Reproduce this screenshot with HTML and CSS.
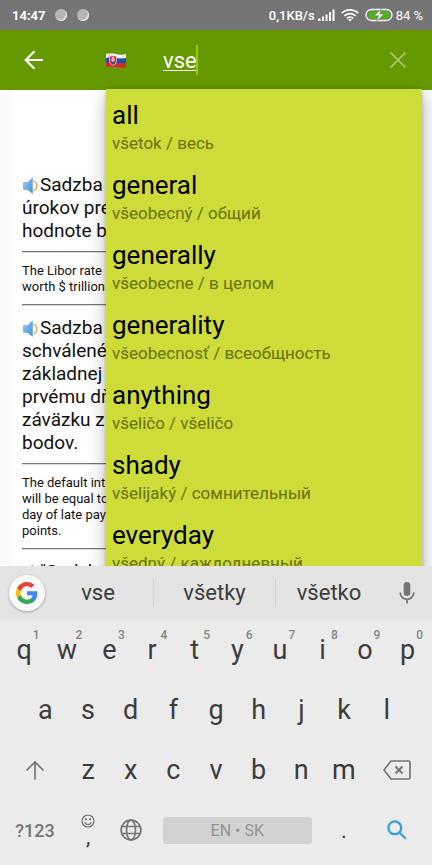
FILE: index.html
```html
<!DOCTYPE html>
<html lang="sk">
<head>
<meta charset="utf-8">
<meta name="viewport" content="width=device-width, initial-scale=1">
<title>Slovník</title>
<link rel="stylesheet" href="styles.css">
</head>
<body>
<div class="status">
  <span class="clock">14:47</span>
  <span class="dot"></span>
  <span class="dot"></span>
  <span class="speed">0,1KB/s</span>
  <svg class="signal" width="18" height="14" viewBox="0 0 18 14" fill="#fff"><path d="M1 13V10.500H3.500V13zM5 13V8.500H7V13zM8.500 13V6.500H10.500V13zM12 13V4H14V13zM15.500 13V1.500H17.500V13z"/></svg>
  <svg class="wifi" width="18" height="14" viewBox="0 0 18 14" fill="none" stroke="#fff" stroke-width="1.700"><path d="M.8 5.200a11.600 11.600 0 0 1 16.400 0M3.400 7.900a7.900 7.900 0 0 1 11.200 0M5.900 10.400a4.400 4.400 0 0 1 6.200 0"/><path d="M9 13.500L7.200 11.600a2.600 2.600 0 0 1 3.600 0z" fill="#fff" stroke="none"/></svg>
  <svg class="battery" width="28" height="14" viewBox="0 0 28 14"><rect x="1" y="1.500" width="26" height="11" rx="5.500" fill="none" stroke="#fff" stroke-width="1.300"/><path d="M7 3.200h14a3.800 3.800 0 0 1 0 7.600H7a3.800 3.800 0 0 1 0-7.600z" fill="#4fb31f"/><path d="M16.200 1L9.500 7.800h4L11.800 13l7-7h-4.200z" fill="#fff" stroke="#757575" stroke-width=".6"/></svg>
  <span class="percent">84 %</span>
</div>

<header class="appbar">
  <button class="back" aria-label="Späť"><svg width="20" height="20" viewBox="0 0 20 20" fill="none" stroke="#fff" stroke-width="2.200"><path d="M19 10H2M10.500 1.200L1.700 10l8.800 8.800"/></svg></button>
  <svg class="flag" width="20" height="15" viewBox="0 0 20 15"><path d="M0 1Q5-.5 10 1T20 1V5.500H0z" fill="#eee"/><path d="M0 5Q5 3.500 10 5T20 5V10H0z" fill="#1750ad"/><path d="M0 9.500Q5 8.500 10 9.500T20 9.500V14Q15 15 10 14T0 14z" fill="#d9232e"/><path d="M3.500 3h7v5q0 3-3.500 4.500Q3.500 11 3.500 8z" fill="#d62b3c" stroke="#f2dfe3" stroke-width=".7"/><path d="M7 4v5M5.700 5.300h2.600M5 7h4" stroke="#fff" stroke-width=".8"/><path d="M4.500 9.500q1.200-1.200 2.500 0 1.200-1.200 2.500 0L7 11.500z" fill="#1750ad"/></svg>
  <div class="field">
    <input class="query" type="text" value="vse" aria-label="Hľadať">
    <span class="caret"></span>
  </div>
  <button class="clear" aria-label="Vymazať"><svg width="18" height="18" viewBox="0 0 18 18" stroke="#a2c267" stroke-width="1.900"><path d="M1.500 1.500l15 15M16.500 1.500l-15 15"/></svg></button>
  <ul class="results">
    <li><button class="result"><span class="word">all</span><span class="gloss">všetok / весь</span></button></li>
    <li><button class="result"><span class="word">general</span><span class="gloss">všeobecný / общий</span></button></li>
    <li><button class="result"><span class="word">generally</span><span class="gloss">všeobecne / в целом</span></button></li>
    <li><button class="result"><span class="word">generality</span><span class="gloss">všeobecnosť / всеобщность</span></button></li>
    <li><button class="result"><span class="word">anything</span><span class="gloss">všeličo / všeličo</span></button></li>
    <li><button class="result"><span class="word">shady</span><span class="gloss">všelijaký / сомнительный</span></button></li>
    <li><button class="result"><span class="word">everyday</span><span class="gloss">všedný / каждодневный</span></button></li>
  </ul>
</header>

<svg class="defs" width="0" height="0" aria-hidden="true">
  <defs>
    <linearGradient id="blue" x1="0" y1="0" x2="1" y2="1"><stop offset="0" stop-color="#9cccf2"/><stop offset="1" stop-color="#3f8fd8"/></linearGradient>
    <symbol id="speaker" viewBox="0 0 16 18"><path d="M1.500 5.500h4L10.500 1v15.500L5.500 12.500h-4z" fill="url(#blue)" stroke="#69a5d8" stroke-width=".6"/><path d="M11.500 4.200q3.400 1.300 3.400 4.700t-3.400 5" fill="none" stroke="#e9a25b" stroke-width="1.400"/></symbol>
  </defs>
</svg>

<main class="content">
  <article class="examples">
    <p class="source"><svg class="speaker"><use href="#speaker"/></svg>Sadzba<br>úrokov pre<br>hodnote b</p>
    <hr>
    <p class="translation">The Libor rate<br>worth $ trillion</p>
    <hr>
    <p class="source"><svg class="speaker"><use href="#speaker"/></svg>Sadzba<br>schválené<br>základnej<br>prvému dň<br>záväzku z<br>bodov.</p>
    <hr>
    <p class="translation">The default int<br>will be equal to<br>day of late pay<br>points.</p>
    <hr>
    <p class="source"><svg class="speaker"><use href="#speaker"/></svg>"Sadzba</p>
  </article>
</main>

<section class="keyboard" aria-label="Klávesnica">
  <div class="strip">
    <button class="google" aria-label="Google"><svg width="22" height="22" viewBox="0 0 48 48"><path fill="#4285f4" d="M46.500 24.500c0-1.600-.1-3.100-.4-4.500H24v9h12.700c-.6 3-2.300 5.500-4.800 7.200v6h7.700c4.500-4.200 6.900-10.300 6.900-17.700z"/><path fill="#34a853" d="M24 48c6.500 0 11.900-2.100 15.900-5.800l-7.700-6c-2.200 1.400-4.900 2.300-8.200 2.300-6.300 0-11.600-4.200-13.500-9.900H2.600v6.200C6.500 42.600 14.600 48 24 48z"/><path fill="#fbbc05" d="M10.500 28.600a14.500 14.500 0 0 1 0-9.200v-6.200H2.600a24 24 0 0 0 0 21.600z"/><path fill="#ea4335" d="M24 9.500c3.500 0 6.700 1.200 9.200 3.600l6.900-6.900C35.900 2.400 30.500 0 24 0 14.600 0 6.500 5.400 2.600 13.200l7.900 6.200C12.400 13.700 17.700 9.500 24 9.500z"/></svg></button>
    <button class="suggest">vse</button>
    <button class="suggest divided">všetky</button>
    <button class="suggest">všetko</button>
    <button class="mic" aria-label="Hlasové zadávanie"><svg width="16" height="22" viewBox="0 0 16 22"><rect x="4.700" y="0" width="6.600" height="14" rx="3.300" fill="#757575"/><path d="M1.200 10.500a6.800 6.800 0 0 0 13.600 0M8 17.300V21.500" fill="none" stroke="#757575" stroke-width="1.800"/></svg></button>
  </div>
  <div class="row">
    <button class="key">q<sup>1</sup></button><button class="key">w<sup>2</sup></button><button class="key">e<sup>3</sup></button><button class="key">r<sup>4</sup></button><button class="key">t<sup>5</sup></button><button class="key">y<sup>6</sup></button><button class="key">u<sup>7</sup></button><button class="key">i<sup>8</sup></button><button class="key">o<sup>9</sup></button><button class="key">p<sup>0</sup></button>
  </div>
  <div class="row inset">
    <button class="key">a</button><button class="key">s</button><button class="key">d</button><button class="key">f</button><button class="key">g</button><button class="key">h</button><button class="key">j</button><button class="key">k</button><button class="key">l</button>
  </div>
  <div class="row">
    <button class="key side" aria-label="Shift"><svg width="20" height="20" viewBox="0 0 20 20" fill="none" stroke="#757575" stroke-width="1.700"><path d="M10 19.500V2M1.500 10.500L10 2l8.500 8.500"/></svg></button><button class="key">z</button><button class="key">x</button><button class="key">c</button><button class="key">v</button><button class="key">b</button><button class="key">n</button><button class="key">m</button><button class="key side" aria-label="Backspace"><svg width="28" height="20" viewBox="0 0 28 20" fill="none" stroke="#757575" stroke-width="1.700"><path d="M8 1h17.500a1.500 1.500 0 0 1 1.500 1.500v15a1.500 1.500 0 0 1-1.500 1.500H8L1 10z"/><path d="M12.500 6.500l7 7M19.500 6.500l-7 7" stroke-width="2"/></svg></button>
  </div>
  <div class="row">
    <button class="key side symbols">?123</button>
    <button class="key comma"><svg width="14" height="14" viewBox="0 0 14 14" fill="none" stroke="#666" stroke-width="1.100"><circle cx="7" cy="7" r="6"/><path d="M3.800 8.300a3.400 3.400 0 0 0 6.400 0"/><circle cx="4.900" cy="5.300" r=".5" fill="#666"/><circle cx="9.100" cy="5.300" r=".5" fill="#666"/></svg><span>,</span></button>
    <button class="key" aria-label="Jazyk"><svg width="22" height="22" viewBox="0 0 22 22" fill="none" stroke="#757575" stroke-width="1.700"><circle cx="11" cy="11" r="9.900"/><ellipse cx="11" cy="11" rx="4.500" ry="9.900"/><path d="M2 7.500h18M2 14.500h18"/></svg></button>
    <div class="spacecell"><button class="space">EN • SK</button></div>
    <button class="key period">.</button>
    <button class="key side" aria-label="Hľadať"><svg width="20" height="20" viewBox="0 0 20 20" fill="none" stroke="#3c9fd6" stroke-width="2.300"><circle cx="7.800" cy="7.800" r="6.400"/><path d="M12.500 12.500l6.300 6.300"/></svg></button>
  </div>
</section>
</body>
</html>
```

FILE: styles.css
```css
* { box-sizing: border-box; }

body {
  margin: 0;
  height: 100vh;
  display: flex;
  flex-direction: column;
  overflow: hidden;
  background: #fafafa;
  color: #111;
  font-family: Roboto, "Noto Sans", sans-serif;
}

button, input {
  margin: 0;
  padding: 0;
  border: 0;
  background: none;
  color: inherit;
  font: inherit;
}

svg { display: block; flex: none; }
.defs { position: absolute; }

.status {
  flex: none;
  height: 30px;
  padding: 0 9px 0 12px;
  display: flex;
  align-items: center;
  background: #757575;
  color: #fff;
  font-size: 13px;
}
.clock { font-weight: 700; margin-right: 9px; }
.dot {
  width: 12px;
  height: 12px;
  margin-right: 10px;
  border-radius: 50%;
  background: #b5b5b5;
  box-shadow: inset -1px -1px 1px #eee;
}
.speed { margin-left: auto; font-weight: 500; }
.signal { margin: 0 6px 0 2px; }
.wifi { margin-right: 6px; }
.battery { margin-right: 3px; }

.appbar {
  position: relative;
  z-index: 1;
  flex: none;
  height: 60px;
  padding: 0 25px 0 24px;
  display: flex;
  align-items: center;
  background: #669900;
  color: #fff;
}
.flag { margin: 0 37px 0 62px; }
.field { flex: 1; display: flex; align-items: center; }
.query {
  width: 33px;
  height: 30px;
  outline: 0;
  font-size: 22px;
  text-decoration: underline;
  text-decoration-thickness: 1px;
  text-underline-offset: 2px;
}
.caret { width: 2px; height: 30px; background: #99cc00; }

.results {
  position: absolute;
  top: 59px;
  left: 106px;
  right: 10px;
  margin: 0;
  padding: 0;
  list-style: none;
  background: #cddc39;
  box-shadow: 0 8px 16px rgba(0, 0, 0, .3), 0 0 4px rgba(0, 0, 0, .2);
}
.result {
  display: block;
  width: 100%;
  height: 70px;
  padding: 9px 6px 5px;
  text-align: left;
}
.word, .gloss { display: block; white-space: nowrap; }
.word { font-size: 26px; line-height: 34px; color: #000; }
.gloss { font-size: 17px; line-height: 22px; color: #6a7210; }

.content {
  flex: 1;
  min-height: 0;
  overflow: hidden;
  padding: 0 12px;
}
.examples {
  min-height: 100%;
  padding: 83px 10px 0;
  background: #fff;
}
.examples p { margin: 0; white-space: nowrap; }
.source { font-size: 19px; line-height: 23px; }
.translation { font-size: 13px; line-height: 16px; }
.speaker {
  display: inline-block;
  width: 16px;
  height: 18px;
  margin-right: 2px;
  vertical-align: -4px;
}
hr {
  height: 2px;
  margin: 9px 0 10px;
  border: 0;
  border-top: 1px solid #777;
  background: #ddd;
}

.keyboard {
  position: relative;
  z-index: 2;
  flex: none;
  padding-bottom: 5px;
  background: #ebebeb;
  color: #3c3c3c;
}
.strip {
  height: 53px;
  display: grid;
  grid-template-columns: 43px 110fr 123fr 106fr 50px;
  align-items: center;
  background: #e4e4e4;
  font-size: 22px;
}
.google {
  width: 36px;
  height: 36px;
  margin-left: 9px;
  display: grid;
  place-items: center;
  border-radius: 50%;
  background: #fafafa;
  box-shadow: 0 1px 3px rgba(0, 0, 0, .3);
}
.suggest { height: 28px; line-height: 28px; }
.divided { border: solid #cfcfcf; border-width: 0 1px; }
.mic { display: grid; place-items: center; }

.row { display: flex; height: 61px; padding: 0 3px; }
.row + .row { height: 60px; }
.row.inset { padding: 0 24px; }
.key {
  position: relative;
  flex: 2 1 0;
  min-width: 0;
  display: flex;
  align-items: center;
  justify-content: center;
  font-size: 27px;
}
.key sup {
  position: absolute;
  top: 9px;
  left: 70%;
  font-size: 12px;
  line-height: 14px;
  font-weight: 500;
  color: #858585;
}
.side { flex-grow: 3; }
.symbols { font-size: 18px; font-weight: 500; color: #757575; }
.comma { flex-direction: column; font-size: 22px; line-height: 18px; }
.period { font-size: 22px; }
.spacecell { flex: 8 1 0; display: flex; align-items: center; justify-content: center; }
.space {
  width: calc(100% - 22px);
  height: 27px;
  border-radius: 3px;
  background: #d2d2d2;
  color: #929292;
  font-size: 16px;
}
```
